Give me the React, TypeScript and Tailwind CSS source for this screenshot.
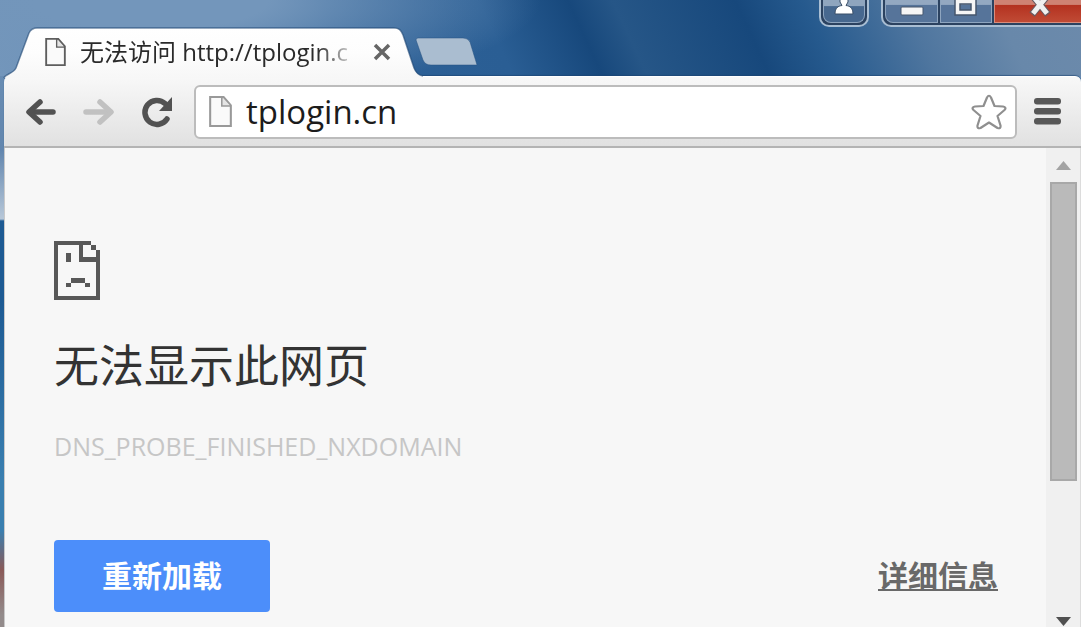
import { useState } from 'react';

const PageIcon = ({ className, stroke }: { className: string; stroke: string }) => (
    <svg viewBox="0 0 22 30" className={className} fill="none" stroke={stroke} strokeWidth="2">
        <path d="M1 1h13l7 8v20H1z" fill="#fafafa" />
        <path d="M12.500 1v8.500H21" />
        <path d="M13 2l7 7h-7z" fill="#e4e4e4" stroke="none" />
    </svg>
);

const SadPageIcon = () => (
    <svg viewBox="0 0 46 59" className="w-[46px] h-[59px]" fill="#585858" aria-hidden="true">
        <path d="M0 0h37v4H4v51h38V9h4v50H0z" />
        <path d="M25 3h4v13h14v5H25z" />
        <path d="M37 4h5v5h-5zM12 12h5v9h-5zM17 37h14v5H17zM12 42h5v4h-5zM31 42h5v4h-5z" />
    </svg>
);

const TabStrip = () => (
    <div className="relative z-10 w-[430px] h-[49px] flex items-center pl-[45px]">
        <svg viewBox="0 0 430 51" className="absolute left-0 top-0 w-[430px] h-[51px]" aria-hidden="true">
            <defs>
                <linearGradient id="tabFill" x1="0" y1="0" x2="0" y2="1">
                    <stop offset="0" stopColor="#ffffff" />
                    <stop offset="0.5" stopColor="#fdfdfd" />
                    <stop offset="1" stopColor="#f7f7f7" />
                </linearGradient>
            </defs>
            <path
                d="M4 51C5 47 13 47 16 41L29 6C31 2 33 1 37 1H394C399 1 401 3 403 8L414 41C416 46 418 48 423 49V51Z"
                fill="url(#tabFill)"
            />
            <path
                d="M4 51C5 47 13 47 16 41L29 6C31 2 33 1 37 1H394C399 1 401 3 403 8L414 41C416 46 418 48 423 49"
                fill="none"
                stroke="#1d4471"
                strokeOpacity="0.6"
                strokeWidth="1.500"
            />
        </svg>
        <PageIcon className="relative w-[21px] h-[28px] shrink-0" stroke="#5e5e5e" />
        <span className="relative ml-[14px] w-[279px] overflow-hidden whitespace-nowrap text-[24px] leading-8 text-[#2a2a2a] [mask-image:linear-gradient(to_right,black_85%,transparent)]">
            无法访问 http://tplogin.c
        </span>
        <button aria-label="关闭标签页" className="relative ml-[14px] p-0">
            <svg viewBox="0 0 18 18" className="w-[18px] h-[18px]" stroke="#666" strokeWidth="3.500">
                <path d="M2 2l14 14M16 2L2 16" />
            </svg>
        </button>
    </div>
);

const WindowControls = () => (
    <div className="flex items-start gap-3">
        <button
            aria-label="用户"
            className="flex justify-center w-[50px] h-[27px] rounded-b-[10px] border-2 border-t-0 border-[#a9bed3] bg-[#2b4260] p-[2px] pt-0"
        >
            <span className="flex justify-center w-full h-full rounded-b-lg border border-t-0 border-[#8ea5bf] bg-linear-to-b from-[#8fa5be] from-25% to-[#47688f] to-30%">
                <svg viewBox="0 0 20 15" className="w-5 h-[15px]" fill="#fff" stroke="#3b4f68" strokeWidth="1">
                    <path d="M6-2v4l2 3.500C4 6 1 8 1 14h18c0-6-3-8-7-8.500l2-3.500v-4z" />
                </svg>
            </span>
        </button>
        <div className="flex w-[200px] h-[27px] rounded-bl-[10px] border-2 border-t-0 border-r-0 border-[#a9bed3] bg-[#2b4260] p-[2px] pt-0 pr-0 gap-[2px]">
            <button
                aria-label="最小化"
                className="flex justify-center w-[53px] rounded-bl-lg border border-t-0 border-[#8ea5bf] bg-linear-to-b from-[#93a8c1] from-20% to-[#56749a] to-25%"
            >
                <svg viewBox="0 0 24 17" className="w-6 h-[17px]" fill="#f5f5f5" stroke="#46566c" strokeWidth="1">
                    <rect x="1" y="7" width="22" height="8" rx="1" />
                </svg>
            </button>
            <button
                aria-label="最大化"
                className="flex justify-center w-[52px] border border-t-0 border-[#8ea5bf] bg-linear-to-b from-[#93a8c1] from-20% to-[#56749a] to-25%"
            >
                <svg viewBox="0 0 24 17" className="w-6 h-[17px]" fill="#f5f5f5" fillRule="evenodd" stroke="#46566c" strokeWidth="1.500">
                    <path d="M1-4H22V15H1zM6 4H17V10H6z" />
                </svg>
            </button>
            <button
                aria-label="关闭"
                className="flex-1 flex justify-center pl-1 border border-t-0 border-r-0 border-[#d98c7c] bg-linear-to-b from-[#cf8273] from-20% via-[#b43220] via-25% to-[#c04a35]"
            >
                <svg viewBox="0 0 24 17" className="w-6 h-[17px]">
                    <path d="M4-5L20 14.500M20-5L4 14.500" stroke="#6a5a60" strokeWidth="7" />
                    <path d="M5-4L19 13.500M19-4L5 13.500" stroke="#f0f0f0" strokeWidth="5" />
                </svg>
            </button>
        </div>
    </div>
);

const Toolbar = () => {
    const [url, setUrl] = useState('tplogin.cn');

    return (
        <div className="flex items-center h-[72px] px-5 rounded-t-md border-t border-t-white border-b-2 border-b-[#b4b4b4] bg-linear-to-b from-[#f8f8f8] to-[#e1e1e1] shadow-[0_-1px_1px_#1d447199]">
            <button aria-label="后退">
                <svg viewBox="0 0 32 28" className="w-8 h-7" fill="none" stroke="#525252" strokeWidth="5.500" strokeLinecap="round" strokeLinejoin="round">
                    <path d="M29 14H6" />
                    <path d="M16 4L5 14l11 10" />
                </svg>
            </button>
            <button aria-label="前进" disabled className="ml-[27px]">
                <svg viewBox="0 0 32 28" className="w-8 h-7" fill="none" stroke="#c1c1c1" strokeWidth="5.500" strokeLinecap="round" strokeLinejoin="round">
                    <path d="M3 14h23" />
                    <path d="M17 4l11 10-11 10" />
                </svg>
            </button>
            <button aria-label="重新加载此页" className="ml-[26px]">
                <svg viewBox="0 0 32 32" className="w-8 h-8" fill="none" stroke="#525252" strokeWidth="5.500">
                    <path d="M24 7.500A12 12 0 1 0 26 23" strokeLinecap="round" />
                    <path d="M31 1v14H18z" fill="#525252" stroke="none" />
                </svg>
            </button>
            <div className="flex-1 flex items-center h-[54px] ml-[21px] pl-[13px] pr-2 rounded-md border-2 border-[#bcbcbc] bg-white">
                <PageIcon className="w-[23px] h-[31px] shrink-0" stroke="#999999" />
                <input
                    type="text"
                    aria-label="地址"
                    value={url}
                    onChange={(e) => setUrl(e.target.value)}
                    className="flex-1 min-w-0 ml-[14px] text-[33px] leading-10 text-[#1c1c1c] outline-none"
                />
                <button aria-label="收藏">
                    <svg viewBox="0 0 36 36" className="w-9 h-9" fill="#fff" stroke="#8f8f8f" strokeWidth="2.200" strokeLinejoin="round">
                        <path d="M16 3.500Q18 0 20 3.500L23.500 12L32 12.500Q36 13.500 33.500 16L26.500 22L29.500 31.500Q30 35 26.500 34L18 28.500L9.500 34Q6 35 6.500 31.500L9.500 22L2.500 16Q0 13.500 4 12.500L12.500 12Z" />
                    </svg>
                </button>
            </div>
            <button aria-label="菜单" className="ml-[17px]">
                <svg viewBox="0 0 27 27" className="w-[27px] h-[27px]" fill="#585858">
                    <rect y="0" width="27" height="6.500" rx="3" />
                    <rect y="10" width="27" height="6.500" rx="3" />
                    <rect y="20" width="27" height="6.500" rx="3" />
                </svg>
            </button>
        </div>
    );
};

const ScrollBar = () => (
    <div className="w-[35px] shrink-0 flex flex-col items-center border-r border-[#dcdcdc] bg-[#f0f0f0]">
        <button aria-label="向上滚动" className="flex items-center justify-center w-full h-[34px]">
            <svg viewBox="0 0 15 9" className="w-[15px] h-[9px]" fill="#a3a3a3">
                <path d="M7.500 0L15 9H0z" />
            </svg>
        </button>
        <div className="w-[27px] flex-[298] border-2 border-[#a8a8a8] bg-[#bababa]"></div>
        <div className="flex-[131]"></div>
        <button aria-label="向下滚动" className="flex items-end justify-center w-full h-[17px] pb-px">
            <svg viewBox="0 0 15 9" className="w-[15px] h-[9px]" fill="#505050">
                <path d="M7.500 9L15 0H0z" />
            </svg>
        </button>
    </div>
);

const ErrorPage = () => (
    <main className="flex-1 pl-[49px] pr-12 pt-[93px] pb-[15px]">
        <SadPageIcon />
        <h1 className="mt-9 text-[45px] leading-[60px] text-[#333]">无法显示此网页</h1>
        <p className="mt-8 text-[25px] leading-9 text-[#c6c6c6]">DNS_PROBE_FINISHED_NXDOMAIN</p>
        <div className="mt-[76px] flex items-center justify-between">
            <button className="h-[72px] px-12 rounded-[4px] bg-[#4c8efa] text-[30px] leading-9 font-bold text-white">
                重新加载
            </button>
            <a href="#details" className="text-[30px] leading-9 font-bold text-[#696969] underline decoration-2 underline-offset-2">
                详细信息
            </a>
        </div>
    </main>
);

const App = () => {
    return (
        <div className="min-h-screen flex flex-col font-['Open_Sans','Noto_Sans_CJK_SC',sans-serif] bg-[linear-gradient(to_bottom,#6f93b8_0,#6286ae_150px,#b7c7d8_219px,#1d5a93_221px,#1d5a93_300px,#3a7fb0_480px,#3a7fb0_530px,#8a5a58_570px,#938b8b_615px)]">
            <header className="flex items-end justify-between h-[76px] bg-[radial-gradient(ellipse_36%_130%_at_14%_0%,#7396bb_30%,transparent_100%),linear-gradient(65deg,#7396bb_0%,#6a8fb6_12%,#2d6096_32%,#2a5e94_46%,#17487c_54%,#265687_58%,#17487c_69%,#265a8e_75%,#4f769f_84%,#6888aa_92%,#6c8aab_100%)]">
                <div className="flex items-end">
                    <TabStrip />
                    <button aria-label="新标签页" className="-ml-4 mb-[9px]">
                        <svg viewBox="0 0 64 31" className="w-16 h-[31px]" fill="#aabdd0" stroke="#244f7f" strokeOpacity="0.5">
                            <path d="M4 2H49Q54 2 56 6L63 29H17Q11 29 9 24L2 4Q2 2 4 2Z" />
                        </svg>
                    </button>
                </div>
                <div className="self-start">
                    <WindowControls />
                </div>
            </header>
            <div className="flex-1 flex flex-col pl-1">
                <Toolbar />
                <div className="flex-1 flex border-l border-[#c9c9c9] bg-[#f7f7f7]">
                    <ErrorPage />
                    <ScrollBar />
                </div>
            </div>
        </div>
    );
};

export default App;
